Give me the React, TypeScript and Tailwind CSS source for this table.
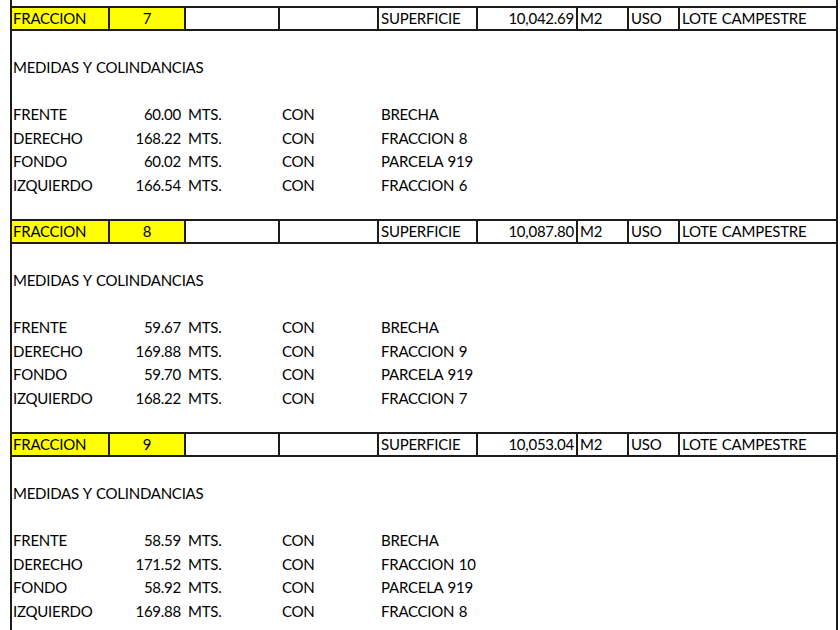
import React from "react";

type Row = { label: string; value: string; to: string };
type Block = { n: string; area: string; rows: Row[] };

const blocks: Block[] = [
  {
    n: "7",
    area: "10,042.69",
    rows: [
      { label: "FRENTE", value: "60.00", to: "BRECHA" },
      { label: "DERECHO", value: "168.22", to: "FRACCION 8" },
      { label: "FONDO", value: "60.02", to: "PARCELA 919" },
      { label: "IZQUIERDO", value: "166.54", to: "FRACCION 6" },
    ],
  },
  {
    n: "8",
    area: "10,087.80",
    rows: [
      { label: "FRENTE", value: "59.67", to: "BRECHA" },
      { label: "DERECHO", value: "169.88", to: "FRACCION 9" },
      { label: "FONDO", value: "59.70", to: "PARCELA 919" },
      { label: "IZQUIERDO", value: "168.22", to: "FRACCION 7" },
    ],
  },
  {
    n: "9",
    area: "10,053.04",
    rows: [
      { label: "FRENTE", value: "58.59", to: "BRECHA" },
      { label: "DERECHO", value: "171.52", to: "FRACCION 10" },
      { label: "FONDO", value: "58.92", to: "PARCELA 919" },
      { label: "IZQUIERDO", value: "169.88", to: "FRACCION 8" },
    ],
  },
];

const cols =
  "grid grid-cols-[96px_76px_94px_99px_99px_100px_51px_51px_158px]";

function Header({ b }: { b: Block }) {
  const cell = "border-l-2 border-[#1c1c1c] flex items-end pb-[2px] h-full whitespace-nowrap";
  return (
    <div className={`${cols} h-[25px] border-y-2 border-[#1c1c1c]`}>
      <div className="bg-[#ffff00] flex items-end pb-[2px] pl-[1px] h-full">FRACCION</div>
      <div className={`${cell} bg-[#ffff00] justify-center`}>{b.n}</div>
      <div className={cell}></div>
      <div className={cell}></div>
      <div className={`${cell} pl-[2px]`}>SUPERFICIE</div>
      <div className={`${cell} justify-end pr-[2px]`}>{b.area}</div>
      <div className={`${cell} pl-[2px]`}>M2</div>
      <div className={`${cell} pl-[2px]`}>USO</div>
      <div className={`${cell} pl-[2px]`}>LOTE CAMPESTRE</div>
    </div>
  );
}

function Blank() {
  return <div className="h-[23.5px]"></div>;
}

function DataRow({ r }: { r: Row }) {
  const c = "flex items-end pb-[2px] h-full whitespace-nowrap";
  return (
    <div className={`${cols} h-[23.5px]`}>
      <div className={`${c} pl-[1px]`}>{r.label}</div>
      <div className={`${c} justify-end pr-[3px]`}>{r.value}</div>
      <div className={`${c} pl-[4px]`}>MTS.</div>
      <div className={`${c} pl-[4px]`}>CON</div>
      <div className={`${c} pl-[4px] col-span-2`}>{r.to}</div>
    </div>
  );
}

function BlockView({ b }: { b: Block }) {
  return (
    <div>
      <Header b={b} />
      <Blank />
      <div className="h-[23.5px] flex items-end pb-[2px] pl-[1px] whitespace-nowrap">MEDIDAS Y COLINDANCIAS</div>
      <Blank />
      {b.rows.map((r) => (
        <DataRow key={r.label} r={r} />
      ))}
      <Blank />
    </div>
  );
}

export default function App() {
  return (
    <div
      className="w-[840px] h-[630px] overflow-hidden bg-white text-black text-[15px] leading-[18px] tracking-[-0.25px] [word-spacing:1px]"
      style={{ fontFamily: "Lato, 'Open Sans', sans-serif" }}
    >
      <div className="ml-[10px] w-[828px] border-x-2 border-[#1c1c1c]">
        <div className="h-[6px]"></div>
        {blocks.map((b) => (
          <BlockView key={b.n} b={b} />
        ))}
      </div>
    </div>
  );
}
